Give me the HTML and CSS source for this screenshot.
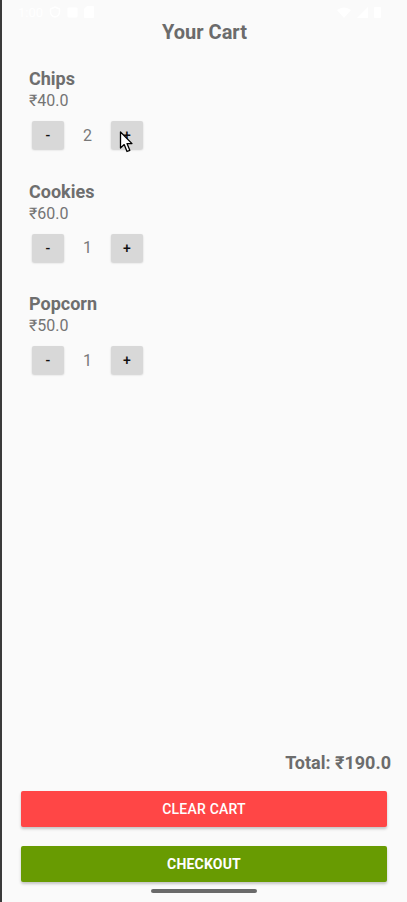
FILE: index.html
```html
<!DOCTYPE html>
<html>
<head>
<meta charset="utf-8">
<link rel="stylesheet" href="styles.css">
</head>
<body>
<div class="screen">
  <div class="status">
    <span class="time">1:00</span>
    <svg class="sicon" width="12" height="12" viewBox="0 0 12 12"><path d="M6 1 L10.5 3 V6 C10.5 8.5 8.5 10.5 6 11 C3.5 10.5 1.5 8.5 1.5 6 V3 Z" fill="none" stroke="#fff" stroke-width="1.4"/></svg>
    <svg class="sicon" width="11" height="11" viewBox="0 0 11 11"><rect x="0.5" y="0.5" width="10" height="10" rx="1" fill="#fff"/></svg>
    <svg class="sicon" width="10" height="12" viewBox="0 0 10 12"><path d="M3 0 H9 a1 1 0 0 1 1 1 V11 a1 1 0 0 1 -1 1 H1 a1 1 0 0 1 -1 -1 V3 Z" fill="#fff"/></svg>
    <span class="spacer"></span>
    <svg class="sicon" width="14" height="11" viewBox="0 0 14 11"><path d="M0 3 Q7 -2 14 3 L7 11 Z" fill="#fff"/></svg>
    <svg class="sicon" width="11" height="11" viewBox="0 0 11 11"><path d="M11 0 V11 H0 Z" fill="#fff"/></svg>
    <svg class="sicon" width="7" height="12" viewBox="0 0 7 12"><rect x="0" y="1" width="7" height="11" rx="1" fill="#fff"/></svg>
  </div>

  <h1 class="title">Your Cart</h1>

  <div class="list">
    <div class="item">
      <div class="name">Chips</div>
      <div class="price">₹40.0</div>
      <div class="controls">
        <button class="qbtn">-</button>
        <span class="count">2</span>
        <button class="qbtn">+
          <svg class="cursor" width="15" height="22" viewBox="0 0 15 22"><path d="M1.5 1 L1.5 17 L5.2 13.6 L8 20.5 L10.8 19.3 L8 12.6 L13 12.6 Z" fill="#fff" stroke="#000" stroke-width="1.3" stroke-linejoin="round"/></svg>
        </button>
      </div>
    </div>
    <div class="item">
      <div class="name">Cookies</div>
      <div class="price">₹60.0</div>
      <div class="controls">
        <button class="qbtn">-</button>
        <span class="count">1</span>
        <button class="qbtn">+</button>
      </div>
    </div>
    <div class="item">
      <div class="name">Popcorn</div>
      <div class="price">₹50.0</div>
      <div class="controls">
        <button class="qbtn">-</button>
        <span class="count">1</span>
        <button class="qbtn">+</button>
      </div>
    </div>
  </div>

  <div class="footer">
    <div class="total">Total: ₹190.0</div>
    <button class="action clear">CLEAR CART</button>
    <button class="action checkout">CHECKOUT</button>
    <div class="homebar"></div>
  </div>
</div>
</body>
</html>
```

FILE: styles.css
```css
* { box-sizing: border-box; }
html, body {
  margin: 0;
  padding: 0;
  background: #fafafa;
}
body {
  font-family: Roboto, "Noto Sans", "DejaVu Sans", sans-serif;
}
.screen {
  width: 407px;
  height: 902px;
  display: flex;
  flex-direction: column;
  border-left: 2px solid #3a3a3a;
  background: #fafafa;
}
.status {
  height: 24px;
  display: flex;
  align-items: center;
  gap: 6px;
  padding: 0 26px 0 16px;
  color: #fff;
  font-size: 13px;
}
.status .spacer { flex: 1; }
.time { color: #fff; }
.title {
  margin: -14px 0 0;
  height: 43px;
  display: flex;
  align-items: center;
  justify-content: center;
  font-size: 20px;
  line-height: 24px;
  font-weight: 700;
  color: #6b6b6b;
}
.list {
  flex: 1;
  padding-left: 27px;
  padding-top: 15px;
}
.item {
  margin-bottom: 31.5px;
}
.name {
  font-size: 18px;
  line-height: 22px;
  font-weight: 700;
  color: #6e6e6e;
}
.price {
  font-size: 16px;
  line-height: 21px;
  color: #747474;
}
.controls {
  display: flex;
  align-items: center;
  margin-top: 10px;
  padding-left: 3px;
}
.qbtn {
  position: relative;
  width: 32px;
  height: 28px;
  border: none;
  border-radius: 2px;
  background: #d8d8d8;
  box-shadow: 0 1px 2px rgba(0,0,0,0.18);
  font-family: Roboto, sans-serif;
  font-size: 14px;
  font-weight: 500;
  color: #111;
  padding: 0;
  display: flex;
  align-items: center;
  justify-content: center;
}
.count {
  width: 47px;
  text-align: center;
  font-size: 16px;
  color: #787878;
}
.cursor {
  position: absolute;
  left: 8px;
  top: 10px;
}
.footer {
  display: flex;
  flex-direction: column;
}
.total {
  text-align: right;
  padding-right: 16px;
  font-size: 18px;
  line-height: 22px;
  font-weight: 700;
  color: #6c6c6c;
}
.action {
  margin: 0 20px 0 19px;
  height: 36px;
  border: none;
  border-radius: 2px;
  color: #fff;
  font-family: Roboto, sans-serif;
  font-size: 14px;
  font-weight: 500;
  letter-spacing: 0.2px;
  box-shadow: 0 2px 3px rgba(0,0,0,0.22);
}
.clear {
  background: #ff4646;
  font-weight: 500;
  margin-top: 17px;
}
.checkout {
  background: #689b02;
  font-weight: 700;
  margin-top: 19px;
}
.homebar {
  width: 106px;
  height: 4px;
  border-radius: 2px;
  background: #6a6a6a;
  align-self: center;
  margin: 7px 0 9px;
  position: relative;
  left: -1px;
}
```
